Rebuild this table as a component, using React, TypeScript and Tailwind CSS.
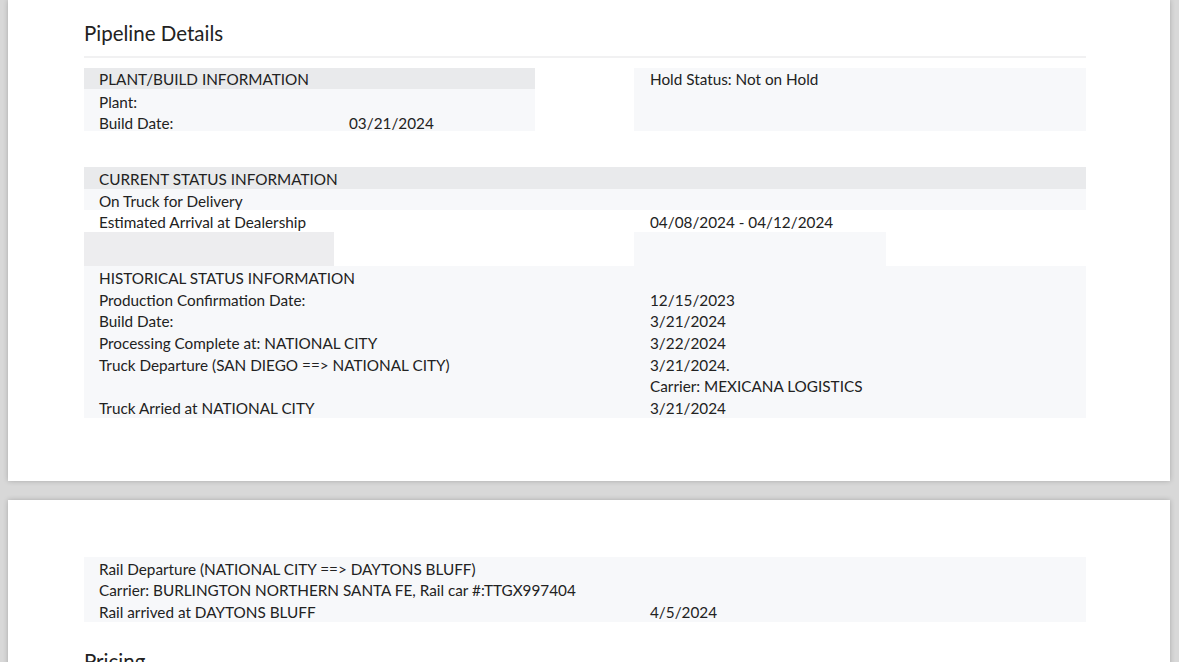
import React from "react"

type Line = { label: string; value?: string }

const historical: Line[] = [
  { label: "HISTORICAL STATUS INFORMATION" },
  { label: "Production Confirmation Date:", value: "12/15/2023" },
  { label: "Build Date:", value: "3/21/2024" },
  { label: "Processing Complete at: NATIONAL CITY", value: "3/22/2024" },
  { label: "Truck Departure (SAN DIEGO ==> NATIONAL CITY)", value: "3/21/2024." },
  { label: "", value: "Carrier: MEXICANA LOGISTICS" },
  { label: "Truck Arried at NATIONAL CITY", value: "3/21/2024" },
]

const rail: Line[] = [
  { label: "Rail Departure (NATIONAL CITY ==> DAYTONS BLUFF)" },
  { label: "Carrier: BURLINGTON NORTHERN SANTA FE, Rail car #:TTGX997404" },
  { label: "Rail arrived at DAYTONS BLUFF", value: "4/5/2024" },
]

// wide row: label on the left, value lines up with the right-hand column
const WideRow: React.FC<Line & { className?: string }> = ({
  label,
  value,
  className,
}) => (
  <div className={`grid grid-cols-[550px_1fr] h-[21.7px] items-center pt-[2px] ${className ?? ""}`}>
    <span className="pl-[15px] whitespace-nowrap leading-[18px]">{label}</span>
    <span className="pl-[16px] whitespace-nowrap leading-[18px]">{value}</span>
  </div>
)

const SectionTitle: React.FC<{ children: React.ReactNode }> = ({ children }) => (
  <h2 className="text-[20.5px] leading-[24px] text-[#222]">{children}</h2>
)

export default function App() {
  return (
    <div
      className="min-h-[662px] bg-[#d8d8d8] pl-[8px] pr-[9px] text-[15.3px] text-[#222] overflow-hidden"
      style={{ fontFamily: "Lato, 'Open Sans', sans-serif" }}
    >
      {/* page 1 */}
      <div className="bg-white shadow-[0_0_5px_rgba(0,0,0,0.22)] pl-[76px] pr-[84px] pt-[21px] pb-[63px]">
        <SectionTitle>Pipeline Details</SectionTitle>
        <div className="mt-[11px] h-[2px] bg-[#f1f1f2]" />

        {/* plant / hold */}
        <div className="mt-[10px] flex justify-between">
          <div className="w-[451px] bg-[#f7f8fa]">
            <div className="h-[21px] flex items-center pt-[2px] bg-[#e9eaec] pl-[15px]">
              PLANT/BUILD INFORMATION
            </div>
            <div className="h-[21px] grid grid-cols-[250px_1fr] items-center pt-[2px]">
              <span className="pl-[15px]">Plant:</span>
              <span className="pl-[15px]"></span>
            </div>
            <div className="h-[21px] grid grid-cols-[250px_1fr] items-center pt-[2px]">
              <span className="pl-[15px]">Build Date:</span>
              <span className="pl-[15px]">03/21/2024</span>
            </div>
          </div>
          <div className="w-[452px] h-[63px] bg-[#f7f8fa] pl-[16px]">
            <div className="h-[21px] flex items-center pt-[2px]">Hold Status: Not on Hold</div>
          </div>
        </div>

        {/* current status */}
        <div className="mt-[36px]">
          <WideRow label="CURRENT STATUS INFORMATION" className="bg-[#e9eaec]" />
          <WideRow label="On Truck for Delivery" className="bg-[#f7f8fa]" />
          <WideRow label="Estimated Arrival at Dealership" value="04/08/2024 - 04/12/2024" />
          <div className="grid grid-cols-[250px_300px_252px_1fr] h-[34px]">
            <div className="bg-[#ededef]" />
            <div />
            <div className="bg-[#f7f8fa]" />
            <div />
          </div>
        </div>

        {/* historical */}
        <div className="bg-[#f7f8fa]">
          {historical.map((l, i) => (
            <WideRow key={i} label={l.label} value={l.value} />
          ))}
        </div>
      </div>

      {/* page 2 */}
      <div className="mt-[19px] bg-white shadow-[0_0_5px_rgba(0,0,0,0.22)] pl-[76px] pr-[84px] pt-[57px] pb-[40px]">
        <div className="bg-[#f7f8fa]">
          {rail.map((l, i) => (
            <WideRow key={i} label={l.label} value={l.value} />
          ))}
        </div>
        <div className="mt-[27px]">
          <SectionTitle>Pricing</SectionTitle>
        </div>
      </div>
    </div>
  )
}
